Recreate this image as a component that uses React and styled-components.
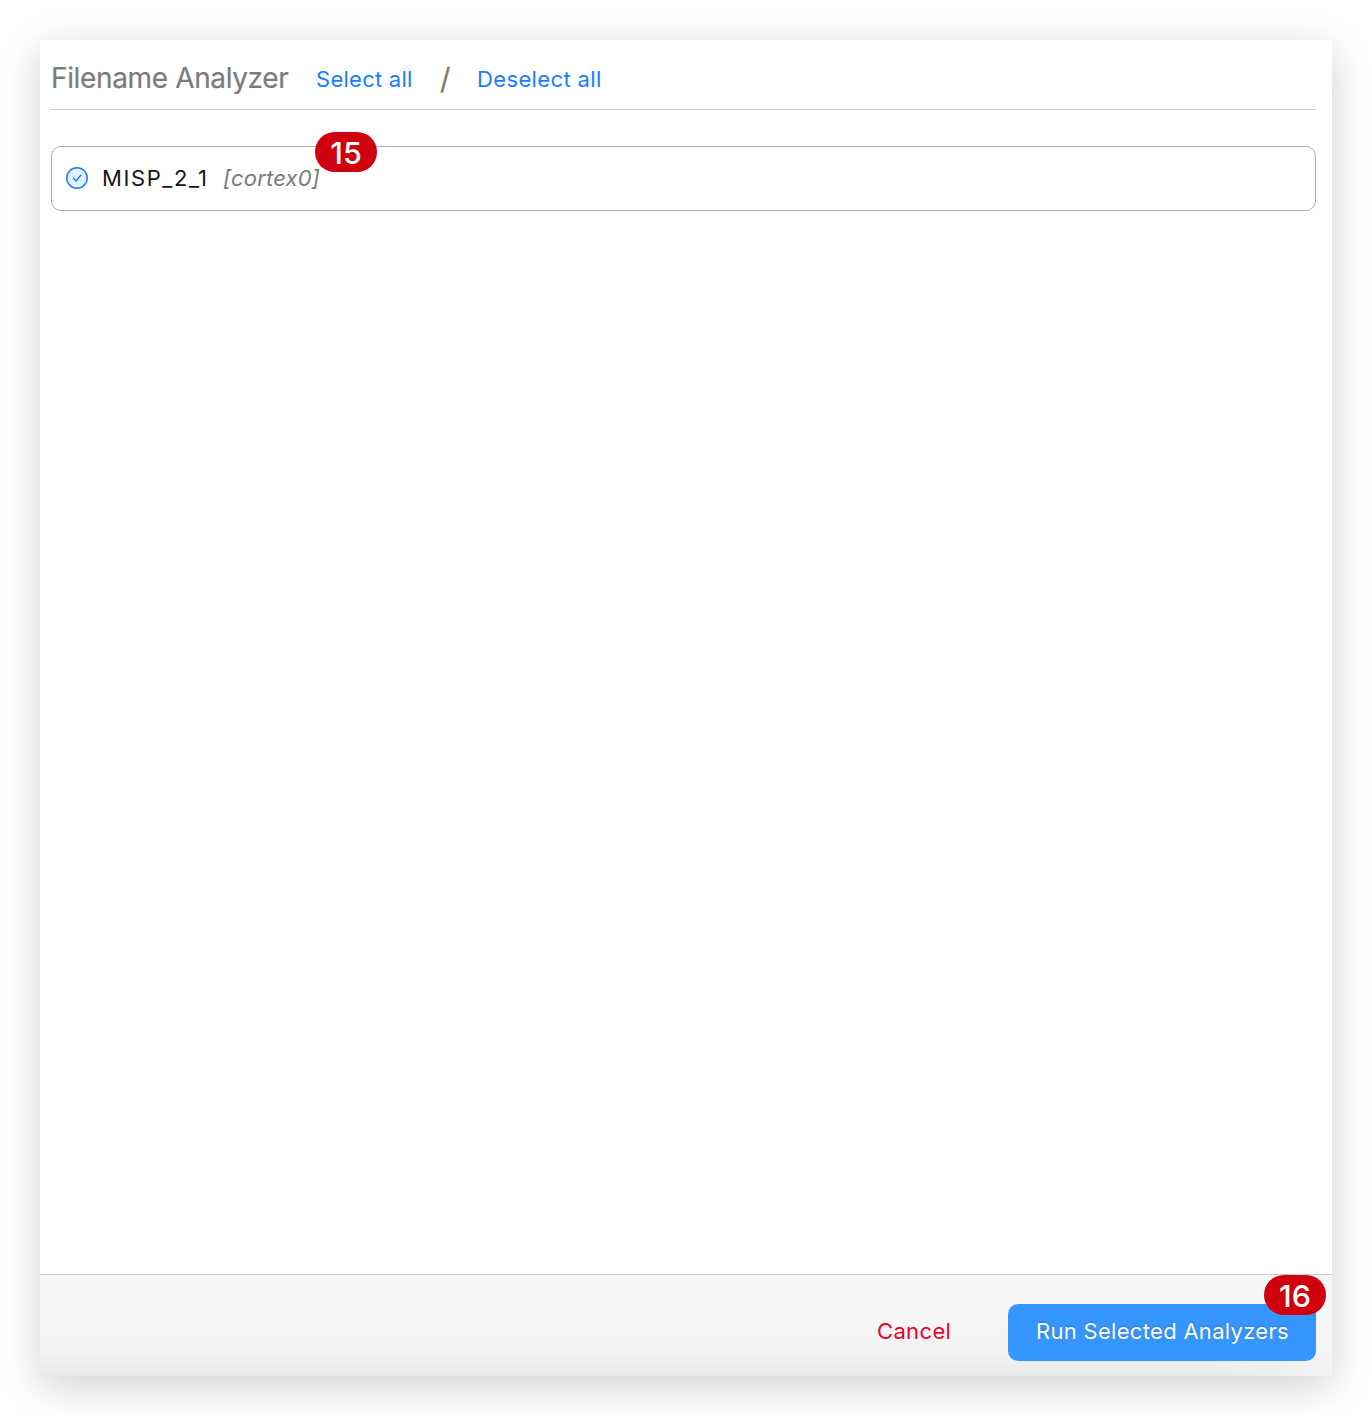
import React from "react";
import styled, { createGlobalStyle } from "styled-components";

const GlobalStyle = createGlobalStyle`
  *, *::before, *::after { box-sizing: border-box; }
  body { margin: 0; background: #fff; font-family: Inter, "Open Sans", sans-serif; }
`;

const Page = styled.main`
  width: 1372px;
  height: 1416px;
  padding: 40px;
  overflow: hidden;
  background: #fff;
`;

const Panel = styled.section`
  display: flex;
  flex-direction: column;
  height: 1336px;
  background: #fff;
  box-shadow: 0 10px 40px rgba(0, 0, 0, 0.19);
`;

const Content = styled.div`
  flex: 1;
  padding: 0 16px 0 11px;
`;

const Header = styled.header`
  display: flex;
  align-items: center;
  height: 70px;
  padding-top: 7px;
  border-bottom: 1px solid #c9c9c9;
`;

const Title = styled.h1`
  width: 265px;
  margin: 0;
  color: #7b7b7b;
  font-size: 28px;
  font-weight: 400;
  line-height: 34px;
  letter-spacing: -0.36px;
  white-space: nowrap;
  -webkit-text-stroke: 0.2px #7b7b7b;
`;

const LinkButton = styled.button`
  width: ${(p) => p.$width}px;
  padding: 2px 0 0;
  border: 0;
  background: none;
  color: ${(p) => p.$color || "#1a7cff"};
  font: 400 22px/28px Inter, sans-serif;
  letter-spacing: ${(p) => p.$tracking || 0}px;
  text-align: left;
  white-space: nowrap;
`;

const Slash = styled.span`
  width: 37px;
  color: #7b7b7b;
  font-size: 29px;
  line-height: 36px;
  padding-top: 2px;
  -webkit-text-stroke: 0.3px #7b7b7b;
`;

const AnalyzerRow = styled.div`
  position: relative;
  display: flex;
  align-items: center;
  height: 65px;
  margin-top: 36px;
  padding: 0 0 2px 14px;
  border: 1px solid #adadad;
  border-radius: 10px;
`;

const CheckIcon = styled.svg`
  flex: none;
  width: 22px;
  height: 22px;
`;

const AnalyzerName = styled.span`
  width: 121px;
  margin-left: 14px;
  color: #161616;
  font-size: 22px;
  line-height: 28px;
  letter-spacing: 1.58px;
  white-space: nowrap;
`;

const CortexName = styled.em`
  color: #7b7b7b;
  font-size: 22px;
  line-height: 28px;
  letter-spacing: 0.2px;
`;

const Badge = styled.span`
  position: absolute;
  top: ${(p) => p.$top}px;
  left: ${(p) => p.$left}px;
  display: flex;
  align-items: center;
  justify-content: center;
  width: 62px;
  height: 40px;
  padding-top: 1px;
  border-radius: 20px;
  background: #d0000f;
  color: #fff;
  font-size: 30.5px;
  font-weight: 500;
  line-height: 36px;
  letter-spacing: 0;
  text-shadow: none;
`;

const Footer = styled.footer`
  display: flex;
  align-items: flex-start;
  justify-content: flex-end;
  height: 102px;
  padding: 29px 16px 0 0;
  border-top: 1px solid #c9c9c9;
  background:
    linear-gradient(to right, transparent 91%, rgba(247, 247, 247, 0.75) 100%),
    linear-gradient(to bottom, #f7f7f7 45%, #f3f3f3 75%, #e9e9e9 100%);
`;

const CancelButton = styled(LinkButton)`
  margin-top: 11px;
`;

const RunButton = styled.button`
  position: relative;
  width: 308px;
  height: 57px;
  padding: 0 0 3px 28px;
  border: 0;
  border-radius: 10px;
  background: #3696ff;
  color: #fff;
  font: 400 22px/28px Inter, sans-serif;
  letter-spacing: 0.3px;
  text-align: left;
  text-shadow: 0 -1px 2px rgba(0, 0, 0, 0.2);
  white-space: nowrap;
`;

export default function App() {
  return (
    <Page>
      <GlobalStyle />
      <Panel>
        <Content>
          <Header>
            <Title>Filename Analyzer</Title>
            <LinkButton $width={124} $tracking={0.26}>Select all</LinkButton>
            <Slash>/</Slash>
            <LinkButton $width={136} $tracking={0.36}>Deselect all</LinkButton>
          </Header>
          <AnalyzerRow>
            <CheckIcon viewBox="0 0 22 22" fill="none" aria-hidden="true">
              <circle cx="11" cy="11" r="10.2" fill="#e1f2ff" stroke="#1a7cff" strokeWidth="1.5" />
              <path d="M7 10.8 10 14 15.2 7.8" stroke="#1a7cff" strokeWidth="1.4" />
            </CheckIcon>
            <AnalyzerName>MISP_2_1</AnalyzerName>
            <CortexName>[cortex0]</CortexName>
            <Badge $top={-15} $left={263}>15</Badge>
          </AnalyzerRow>
        </Content>
        <Footer>
          <CancelButton $width={131} $color="#e80529" $tracking={0.35}>Cancel</CancelButton>
          <RunButton>
            Run Selected Analyzers
            <Badge $top={-29} $left={256}>16</Badge>
          </RunButton>
        </Footer>
      </Panel>
    </Page>
  );
}
